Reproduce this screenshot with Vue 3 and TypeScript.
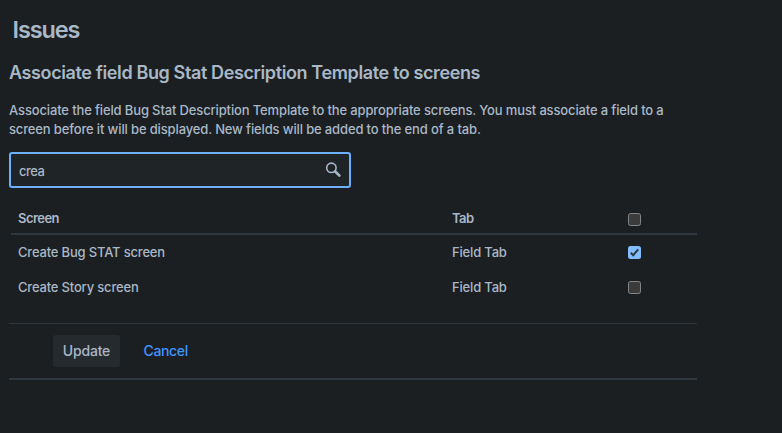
<script setup lang="ts">
import { computed, ref } from 'vue'

interface ScreenRow {
  name: string
  tab: string
  selected: boolean
}

const query = ref('crea')
const rows = ref<ScreenRow[]>([
  { name: 'Create Bug STAT screen', tab: 'Field Tab', selected: true },
  { name: 'Create Story screen', tab: 'Field Tab', selected: false },
])

const allSelected = computed(() => rows.value.every((row) => row.selected))

function toggleAll() {
  const next = !allSelected.value
  rows.value.forEach((row) => (row.selected = next))
}
</script>

<template>
  <main class="page">
    <h1 class="title">Issues</h1>
    <h2 class="subtitle">Associate field Bug Stat Description Template to screens</h2>
    <p class="intro">
      <span class="line">Associate the field Bug Stat Description Template to the appropriate screens. You must associate a field to a</span>
      <span class="line">screen before it will be displayed. New fields will be added to the end of a tab.</span>
    </p>

    <label class="search">
      <input v-model="query" class="search-input" type="text" />
      <svg class="search-icon" viewBox="0 0 16 16" width="16" height="16">
        <circle cx="6.4" cy="5.8" r="4.7" fill="none" stroke="currentColor" stroke-width="1.6" />
        <path d="M10 9.3 L14.4 13.6" stroke="currentColor" stroke-width="2.6" stroke-linecap="round" />
      </svg>
    </label>

    <section class="table">
      <div class="row head">
        <span class="cell-screen">Screen</span>
        <span class="cell-tab">Tab</span>
        <button class="box" :class="{ checked: allSelected }" @click="toggleAll">
          <svg v-if="allSelected" viewBox="0 0 13 13" width="13" height="13"><path d="M2.8 6.8 L5.2 9.2 L10.2 3.4" /></svg>
        </button>
      </div>
      <div v-for="row in rows" :key="row.name" class="row">
        <span class="cell-screen">{{ row.name }}</span>
        <span class="cell-tab">{{ row.tab }}</span>
        <button class="box" :class="{ checked: row.selected }" @click="row.selected = !row.selected">
          <svg v-if="row.selected" viewBox="0 0 13 13" width="13" height="13"><path d="M2.8 6.8 L5.2 9.2 L10.2 3.4" /></svg>
        </button>
      </div>
    </section>

    <footer class="actions">
      <button class="update">Update</button>
      <a class="cancel">Cancel</a>
    </footer>
  </main>
</template>

<style>
body {
  background: #1b1f22;
}
</style>

<style scoped>
.page {
  box-sizing: border-box;
  width: 782px;
  height: 433px;
  padding: 16px 85px 0 9px;
  background: #1b1f22;
  color: #a9b8c7;
  font-family: Inter, "Liberation Sans", sans-serif;
  font-size: 13px;
  font-weight: 450;
  letter-spacing: -0.14px;
}
.title {
  margin: 0 0 0 3.5px;
  font-size: 23.5px;
  line-height: 28px;
  font-weight: 560;
  letter-spacing: -1.1px;
}
.subtitle {
  margin: 17px 0 0;
  font-size: 18px;
  line-height: 24px;
  font-weight: 560;
  letter-spacing: -0.38px;
  white-space: nowrap;
}
.intro {
  margin: 16px 0 0;
  line-height: 19px;
}
.line {
  display: block;
  width: max-content;
  white-space: nowrap;
}
.search {
  display: flex;
  align-items: center;
  box-sizing: border-box;
  width: 342px;
  height: 36px;
  margin-top: 13px;
  padding: 0 8px;
  border: 2px solid #6cb0ff;
  border-radius: 3px;
  background: #1f2426;
}
.search-input {
  flex: 1;
  min-width: 0;
  padding: 1px 0 0;
  border: 0;
  outline: 0;
  background: transparent;
  color: inherit;
  font: inherit;
  letter-spacing: -0.5px;
}
.search-icon {
  flex: none;
  display: block;
}
.table {
  margin: 16px 0 0 2px;
}
.row {
  display: flex;
  align-items: center;
  height: 35px;
  padding-left: 7px;
  letter-spacing: -0.18px;
}
.head {
  height: 29px;
  border-bottom: 2px solid #2f3840;
  font-weight: 600;
  letter-spacing: -0.55px;
}
.head .box {
  margin-top: 2px;
}
.cell-screen,
.cell-tab {
  padding-bottom: 2px;
}
.cell-screen {
  width: 434px;
}
.cell-tab {
  width: 176px;
}
.box {
  box-sizing: border-box;
  width: 13px;
  height: 13px;
  padding: 0;
  border: 1px solid #858585;
  border-radius: 2.5px;
  background: #3b3b3b;
}
.box.checked {
  border: 0;
  background: #84bdff;
}
.box svg {
  display: block;
}
.box path {
  fill: none;
  stroke: #30363c;
  stroke-width: 2;
}
.actions {
  display: flex;
  align-items: center;
  box-sizing: border-box;
  height: 57px;
  margin-top: 18px;
  padding-left: 44px;
  border-top: 1px solid #2f373d;
  border-bottom: 2px solid #2f3840;
}
.update {
  width: 67px;
  height: 32px;
  padding: 0 0 2px;
  border: 0;
  border-radius: 3px;
  background: #252a2e;
  color: #a9b8c7;
  font: inherit;
  font-size: 14px;
  letter-spacing: -0.2px;
}
.cancel {
  margin-left: 23.5px;
  padding-bottom: 2px;
  color: #3f95ff;
  font-size: 14px;
  letter-spacing: -0.36px;
}
</style>
